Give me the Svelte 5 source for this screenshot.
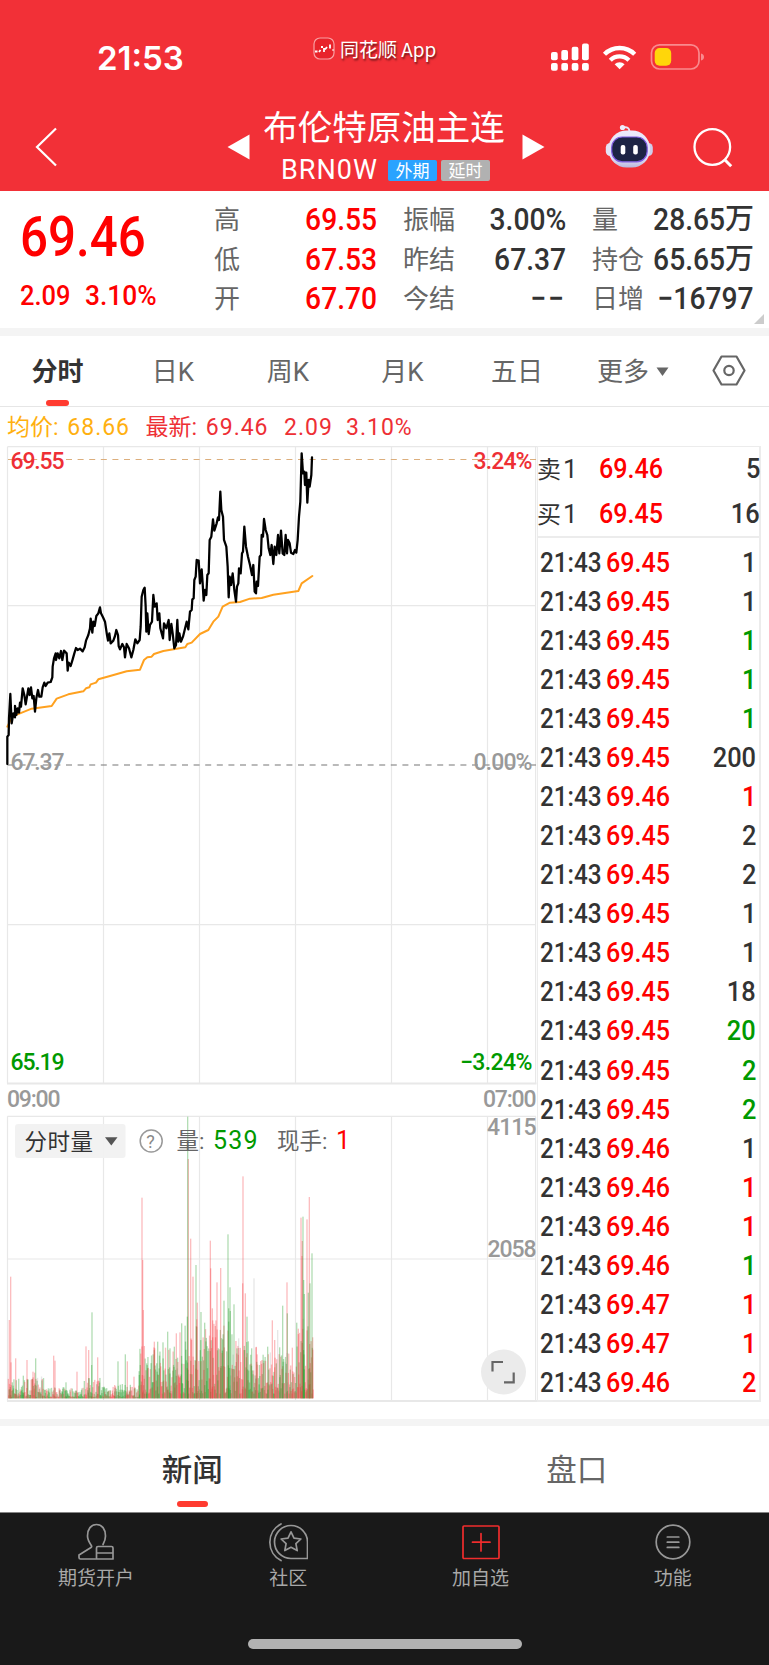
<script>
  const quotes = [
    { label: '高', value: '69.55', up: true },
    { label: '振幅', value: '3.00%' },
    { label: '量', value: '28.65', unit: '万' },
    { label: '低', value: '67.53', up: true },
    { label: '昨结', value: '67.37' },
    { label: '持仓', value: '65.65', unit: '万' },
    { label: '开', value: '67.70', up: true },
    { label: '今结', value: '−−', wide: true },
    { label: '日增', value: '−16797' }
  ]

  const periods = ['分时', '日K', '周K', '月K', '五日']

  const book = [
    { side: '卖', price: '69.46', volume: 5 },
    { side: '买', price: '69.45', volume: 16 }
  ]

  // price, volume, direction
  const ticks = [
    ['69.45', 1, ''],
    ['69.45', 1, ''],
    ['69.45', 1, 'down'],
    ['69.45', 1, 'down'],
    ['69.45', 1, 'down'],
    ['69.45', 200, ''],
    ['69.46', 1, 'up'],
    ['69.45', 2, ''],
    ['69.45', 2, ''],
    ['69.45', 1, ''],
    ['69.45', 1, ''],
    ['69.45', 18, ''],
    ['69.45', 20, 'down'],
    ['69.45', 2, 'down'],
    ['69.45', 2, 'down'],
    ['69.46', 1, ''],
    ['69.46', 1, 'up'],
    ['69.46', 1, 'up'],
    ['69.46', 1, 'down'],
    ['69.47', 1, 'up'],
    ['69.47', 1, 'up'],
    ['69.46', 2, 'up']
  ]

  // both lines are in 3x pixels
  const priceLine =
    '22,972 22,890 26,885 27,835 31,762 35,850 40,820 45,832 45,798 49,825 53,805 57,818 60,788 63,800 68,745 73,765 77,793 81,770 85,745 89,765 93,742 97,775 101,768 105,815 109,775 114,750 118,770 124,770 128,742 133,728 137,738 143,728 152,726 157,712 158,680 162,655 167,640 168,660 173,640 178,655 183,633 187,660 192,632 200,640 203,692 206,668 212,678 218,658 223,640 228,624 233,630 240,626 248,634 254,622 258,602 265,585 270,565 272,536 277,578 280,545 284,558 289,528 295,520 300,502 303,520 309,532 315,545 321,585 324,602 328,580 332,610 340,602 345,588 349,570 354,585 356,618 360,628 367,612 372,622 375,652 380,612 387,625 394,652 400,630 406,598 412,610 419,600 422,560 425,470 430,450 434,443 437,500 439,575 442,520 446,582 450,555 456,545 460,465 464,500 470,490 473,540 478,520 481,565 489,595 492,550 499,565 506,540 509,600 514,552 518,580 523,625 528,615 532,540 535,605 538,580 543,605 549,590 554,570 560,545 565,568 570,515 575,510 577,478 581,475 583,420 587,410 590,360 596,362 600,430 605,388 608,430 611,482 615,450 619,465 622,405 626,400 629,300 634,290 639,238 643,272 650,250 654,232 657,240 661,155 664,210 669,230 672,300 679,320 683,380 686,472 689,410 693,435 698,400 703,450 708,485 711,440 715,430 717,385 722,400 726,340 729,335 733,260 738,320 744,350 750,375 756,405 760,375 764,455 768,460 770,425 774,438 779,350 783,345 785,285 789,290 792,237 797,270 802,285 806,325 811,345 815,315 820,372 824,320 829,345 834,285 838,340 843,272 848,340 853,345 857,285 861,340 864,300 869,310 873,338 880,342 885,330 889,338 893,300 897,230 901,185 905,40 909,100 913,95 915,135 919,98 922,188 926,120 929,140 934,105 936,52'
  const averageLine =
    '22,860 27,850 36,830 60,820 95,806 155,798 170,776 205,763 250,754 258,745 268,742 272,733 288,728 295,718 330,708 380,694 420,689 432,660 442,652 455,650 462,642 490,633 556,622 562,612 575,608 600,582 625,570 640,545 655,530 668,500 690,488 720,486 750,476 785,474 820,464 895,453 905,430 937,408'

  // volume peaks: x, top
  const peaks = {
    up: [[28, 810], [32, 680], [33, 937], [47, 925], [81, 930], [99, 965], [104, 968], [127, 987], [161, 917], [165, 932], [231, 965], [258, 889], [266, 900], [293, 922], [344, 1005], [382, 934], [402, 980], [426, 443], [428, 630], [430, 780], [433, 888], [463, 875], [529, 850], [540, 847], [565, 327], [572, 566], [579, 680], [590, 808], [592, 758], [631, 572], [632, 655], [637, 775], [638, 862], [646, 828], [651, 697], [662, 654], [728, 700], [729, 379], [736, 730], [768, 892], [786, 930], [817, 811], [824, 870], [861, 697], [877, 893], [895, 836], [903, 503], [906, 618], [907, 573], [921, 508], [928, 441], [929, 882], [938, 862]],
    down: [[70, 977], [107, 925], [198, 997], [275, 945], [276, 787], [354, 934], [376, 913], [418, 975], [440, 940], [473, 875], [489, 877], [503, 845], [510, 895], [523, 890], [545, 820], [562, 800], [563, 200], [588, 645], [603, 786], [614, 818], [672, 752], [684, 553], [686, 775], [690, 712], [691, 783], [702, 763], [711, 895], [741, 800], [755, 895], [803, 890], [839, 892], [848, 767], [862, 790], [909, 500], [911, 690], [913, 732], [925, 728], [930, 700], [936, 610]],
    flat: [[762, 685], [833, 840], [716, 865]]
  }

  // activity per stretch of the session: end x, usual peak
  const activity = [[140, 62], [250, 30], [300, 60], [415, 40], [550, 145], [620, 215], [715, 225], [770, 160], [890, 125], [941, 240]]

  let seed = 7
  const random = () => {
    seed = (seed * 16807) % 2147483647
    return seed / 2147483647
  }

  const bars = []
  for (let x = 25; x < 940; x += 1.2) {
    const level = activity.find(([end]) => x < end)[1]
    const r = random()
    const busy = x > 420 ? 14 : 4
    const height = busy + level * Math.pow(random(), 1.6)
    bars.push({ x, height, kind: r < 0.5 ? 'up' : r < 0.96 ? 'down' : 'flat' })
  }
  for (const kind in peaks) {
    for (const [x, top] of peaks[kind]) bars.push({ x, height: 1045 - top, kind })
  }

  const columns = [103.5, 199.5, 295.5, 391.5, 487.5]
</script>

<header>
  <div class="status">
    <span class="clock">21:53</span>
    <span class="app">
      <svg width="22" height="23" viewBox="0 0 22 23">
        <rect x="1" y="1" width="20" height="21" rx="6" fill="#e8232b" stroke="#f8a0a3" stroke-width="1.2" />
        <path d="M2 14.500h2.500M6 15l1.500-2M8 10h2M11 11v4M12 12.500l2-2.500M17 7.500v4M19.500 13h1" fill="none" stroke="#fff" stroke-width="1.800" />
      </svg>
      同花顺 App
    </span>
    <svg class="signals" width="154" height="28" viewBox="551 43 154 28">
      <g fill="#fff">
        <rect x="551" y="52" width="6.7" height="8.300" rx="2" />
        <rect x="561.3" y="50" width="6.700" height="10.300" rx="2" />
        <rect x="571.7" y="46.800" width="6.700" height="13.500" rx="2" />
        <rect x="582" y="43.600" width="6.800" height="16.700" rx="2" />
        <rect x="551" y="63" width="6.700" height="7.800" rx="2" />
        <rect x="561.3" y="63" width="6.700" height="7.800" rx="2" />
        <rect x="571.7" y="63" width="6.700" height="7.800" rx="2" />
        <rect x="582" y="63" width="6.800" height="7.800" rx="2" />
        <path d="M619.600 69.300l-5-5a7.200 7.200 0 0 1 10 0z" />
      </g>
      <g fill="none" stroke="#fff" stroke-width="4.400">
        <path d="M604.500 54.200a21.500 21.500 0 0 1 30.200 0" />
        <path d="M610.300 60.200a13.300 13.300 0 0 1 18.600 0" />
      </g>
      <rect x="651.500" y="44.800" width="47.500" height="24.200" rx="8" fill="none" stroke="#f98a8e" stroke-width="1.700" />
      <path d="M701 53.500q3 .8 3 3.500t-3 3.500z" fill="#f98a8e" />
      <rect x="654.700" y="48" width="16.500" height="17.800" rx="5" fill="#ffd60a" />
    </svg>
  </div>

  <div class="bar">
    <svg class="back" width="23" height="40" viewBox="0 0 23 40">
      <path d="M21 1.500L2 20l19 18.500" fill="none" stroke="#fff" stroke-width="2.200" />
    </svg>
    <svg class="prev" width="23" height="26" viewBox="0 0 23 26"><path d="M22.500 .5v25L.5 13z" fill="#fff" /></svg>
    <div class="title">
      <h1>布伦特原油主连</h1>
      <p>
        <span class="code">BRN0W</span>
        <span class="tag">外期</span>
        <span class="tag delayed">延时</span>
      </p>
    </div>
    <svg class="next" width="23" height="26" viewBox="0 0 23 26"><path d="M.5 .5v25l22-12.500z" fill="#fff" /></svg>
    <svg class="robot" width="48" height="46" viewBox="605 124 48 46">
      <defs>
        <linearGradient id="shell" x1="0" y1="0" x2="0" y2="1">
          <stop offset="0" stop-color="#eceafb" />
          <stop offset=".75" stop-color="#e2e0f6" />
          <stop offset="1" stop-color="#b9b7dd" />
        </linearGradient>
      </defs>
      <path d="M623 127.500q6-1.500 6.500 4" fill="none" stroke="#e9e6f8" stroke-width="2" />
      <circle cx="622.500" cy="127.500" r="2.600" fill="#efecfb" />
      <rect x="605.800" y="143" width="9" height="13" rx="4.500" fill="#e4e2f6" />
      <rect x="643.800" y="143" width="9" height="13" rx="4.500" fill="#cfcdea" />
      <rect x="608.500" y="130.500" width="41.500" height="37" rx="18" fill="url(#shell)" />
      <rect x="611.700" y="137" width="35.500" height="24.800" rx="10.500" fill="#1d2444" stroke="#7e5be0" stroke-width="1.200" />
      <rect x="620.700" y="145" width="4.600" height="9.500" rx="2" fill="#fff" />
      <rect x="633.200" y="145" width="4.600" height="9.500" rx="2" fill="#fff" />
    </svg>
    <svg class="search" width="40" height="40" viewBox="0 0 40 40" fill="none" stroke="#fff" stroke-width="2.300">
      <circle cx="19.300" cy="19" r="17.800" />
      <path d="M31.500 31.500l6.700 6.700" stroke-width="3" />
    </svg>
  </div>
</header>

<section class="quote">
  <div class="last">
    <b class="din">69.46</b>
    <p><span class="din">2.09</span><span class="din">3.10%</span></p>
  </div>
  <dl>
    {#each quotes as { label, value, unit, up, wide }}
      <div>
        <dt>{label}</dt>
        <dd class:up class:wide><span class="din">{value}</span>{#if unit}<i>{unit}</i>{/if}</dd>
      </div>
    {/each}
  </dl>
  <svg class="corner" width="10" height="10" viewBox="0 0 10 10"><path d="M10 0v10H0z" fill="#ccc" /></svg>
</section>

<nav class="periods">
  {#each periods as period, i}
    <span class:active={i === 0}>{period}</span>
  {/each}
  <span class="more">更多<svg width="13" height="10" viewBox="0 0 13 10"><path d="M.5 .5h12l-6 8.500z" fill="#666" /></svg></span>
  <svg class="settings" width="34" height="31" viewBox="0 0 34 31" fill="none" stroke="#666" stroke-width="2.200">
    <path d="M9.500 1.500h15l8 14-8 14h-15l-8-14z" stroke-linejoin="round" />
    <circle cx="17" cy="15.500" r="4.700" />
  </svg>
</nav>

<div class="summary">
  <span class="avg">均价: <em>68.66</em></span>
  <span>最新: <em>69.46</em></span>
  <span><em>2.09</em></span>
  <span><em>3.10%</em></span>
</div>

<main>
  <svg class="chart" width="537" height="957" viewBox="0 446 537 957">
    <g class="grid">
      <path d="M7.500 446.700H537M7.500 605.600H536M7.500 924.600H536M7.500 1116.300H536M7.500 1259H536" />
      {#each columns as x}
        <path d="M{x} 446.700V1083M{x} 1116.300V1401" />
      {/each}
      <path d="M7.500 446.700V1083.500M7.500 1116.300V1401M535.600 446.700V1083.500M535.600 1116.300V1401" />
      <path d="M7 1083.500H536.500M7 1401H537" stroke-width="1.800" />
    </g>
    <path class="dash" d="M8 459.500H536" stroke="#dcae7c" />
    <path class="dash" d="M8 765H536" stroke="#777" />
    <g transform="translate(0 440) scale(.33333)" fill="none" stroke-linejoin="round" stroke-linecap="round">
      <polyline points={averageLine} stroke="#ffa11f" stroke-width="6" />
      <polyline points={priceLine} stroke="#000" stroke-width="6.800" />
    </g>

    <g class="scale">
      <text x="10.500" y="469" textLength="54" class="high">69.55</text>
      <text x="473.500" y="469" textLength="59" class="high">3.24%</text>
      <text x="10.500" y="769.500" textLength="54">67.37</text>
      <text x="473.500" y="769.500" textLength="59">0.00%</text>
      <text x="10.500" y="1070" textLength="54" class="low">65.19</text>
      <text x="460" y="1070" textLength="72.500" class="low">−3.24%</text>
      <text x="7" y="1107" textLength="53.500">09:00</text>
      <text x="483" y="1107" textLength="53.500">07:00</text>
      <text x="487" y="1135" textLength="49.500">4115</text>
      <text x="487.500" y="1257" textLength="49">2058</text>
    </g>

    <g transform="translate(0 1050) scale(.33333)">
      {#each bars as { x, height, kind }}
        <rect class={kind} x={x - 2} y={1045 - height} width="4" {height} />
      {/each}
    </g>

    <g class="legend">
      <rect x="15" y="1124" width="110.500" height="34" rx="3" fill="#f1f1f1" fill-opacity=".96" />
      <text x="24.500" y="1149.500" textLength="68.500" fill="#333">分时量</text>
      <path d="M105 1137.300h12.500l-6.200 8.200z" fill="#555" />
      <circle cx="151.200" cy="1141" r="11" fill="none" stroke="#999" stroke-width="1.500" />
      <text x="146.300" y="1147.500" class="help">?</text>
      <text x="176.500" y="1149">量:</text>
      <text x="213" y="1149.300" class="count low" textLength="44.500">539</text>
      <text x="277" y="1149">现手:</text>
      <text x="336" y="1149.300" class="count now">1</text>
    </g>

    <circle cx="503.500" cy="1372" r="22.500" fill="#ebebeb" />
    <path d="M492.500 1371.500v-9.500h10.500M504 1382.300h9.700v-9.800" fill="none" stroke="#666" stroke-width="2.200" />
  </svg>

  <aside>
    <div class="book">
      {#each book as { side, price, volume }}
        <p>
          <span class="side">{side}<em>1</em></span>
          <span class="din price">{price}</span>
          <span class="din volume">{volume}</span>
        </p>
      {/each}
    </div>
    <ul>
      {#each ticks as [price, volume, direction]}
        <li>
          <span class="din time">21:43</span>
          <span class="din price">{price}</span>
          <span class="din volume {direction}">{volume}</span>
        </li>
      {/each}
    </ul>
  </aside>
</main>

<nav class="sections">
  <span class="active">新闻</span>
  <span>盘口</span>
</nav>

<footer>
  <div class="tools">
    <div>
      <svg width="40" height="40" viewBox="-1 0 40 40">
        <path d="M18 36H3.500q-1.500 0-1.500-1.500V32l12-7.500c.8-.5.800-1.200.300-2-2-3-3.800-6-3.800-9.500 0-7 3.500-11.500 9-11.500s9 4.500 9 11.500c0 3.200-1 5.800-2.500 8.500M19.500 36V25q0-1.500 1.500-1.500h13.500q1.500 0 1.500 1.500v11zM19.500 30H36" />
      </svg>
      期货开户
    </div>
    <div>
      <svg width="40" height="40" viewBox="-.5 0 40 40">
        <path d="M22.500 2.500a16 16 0 0 0 0 33H39V19A16.500 16.500 0 0 0 22.500 2.500z" />
        <path d="M12.500 1a20.500 20.500 0 0 0 0 36.500" />
        <path d="M22.500 8.800l3 6.300 6.900.900-5 4.700 1.300 6.900-6.200-3.300-6.200 3.300 1.300-6.900-5-4.700 6.900-.9z" />
      </svg>
      社区
    </div>
    <div>
      <svg class="add" width="40" height="40" viewBox="0 0 40 40">
        <rect x="2" y="3" width="36" height="32.500" rx="1" />
        <path d="M20 10.500v17.500M11.500 19.200h17.500" />
      </svg>
      加自选
    </div>
    <div>
      <svg width="40" height="40" viewBox="0 0 40 40">
        <circle cx="20" cy="19" r="16.800" />
        <path d="M14.300 14h11.500M14.300 19.200h11.500M14.300 24.400h11.500" />
      </svg>
      功能
    </div>
  </div>
  <div class="home"></div>
</footer>

<style>
  :global(body) {
    background: #fff;
    font-family: Roboto, 'Noto Sans CJK SC', sans-serif;
    color: #333;
  }
  :global(#app) {
    width: 769px;
    height: 1665px;
    overflow: hidden;
  }
  svg {
    display: block;
    flex: none;
  }
  h1,
  p,
  dl,
  dd,
  ul {
    margin: 0;
    padding: 0;
    list-style: none;
  }
  em,
  i {
    font-style: normal;
  }
  /* narrow digits */
  .din {
    display: inline-block;
    font-weight: 500;
    transform: scaleX(0.91);
    transform-origin: left;
    white-space: pre;
  }

  header {
    height: 191px;
    background: #f23037;
    color: #fff;
  }
  .status {
    height: 100px;
    display: grid;
    grid-template-columns: 97px 216px 238px 1fr;
    align-items: start;
  }
  .clock {
    grid-column: 2;
    padding-top: 38px;
    font: 600 33px/40px Inter, sans-serif;
  }
  .app {
    display: flex;
    gap: 5px;
    padding-top: 37px;
    font: 19px/23px 'Noto Sans CJK SC', sans-serif;
    text-shadow: 1px 2px 2px rgba(0, 0, 0, 0.55);
    white-space: nowrap;
  }
  .signals {
    margin-top: 43px;
  }
  .bar {
    height: 91px;
    display: grid;
    grid-template-columns: 192px 23px 272px 84px 86px 1fr;
    padding-left: 35px;
    align-items: start;
  }
  .back {
    margin-top: 27px;
  }
  .prev,
  .next {
    margin-top: 34px;
  }
  .title {
    text-align: center;
  }
  h1 {
    font-size: 34.5px;
    line-height: 44px;
    font-weight: 400;
    margin: 6px -8px 0 -12px;
    white-space: nowrap;
  }
  .title p {
    display: flex;
    margin: 7px 0 0 31px;
    align-items: center;
    height: 26px;
  }
  .code {
    font-size: 27px;
    line-height: 28px;
    width: 107px;
    text-align: left;
    letter-spacing: 1px;
  }
  .tag {
    width: 49px;
    height: 21px;
    margin-right: 4px;
    border-radius: 2px;
    background: #2aa3ff;
    font-size: 17px;
    line-height: 22px;
  }
  .tag.delayed {
    background: #b1b1b1;
  }
  .robot {
    margin-top: 24px;
    margin-left: -1px;
  }
  .search {
    margin: 28px 0 0 1px;
  }

  .quote {
    position: relative;
    height: 137px;
    display: flex;
    border-bottom: 8px solid #f4f4f4;
  }
  .last {
    width: 214px;
    padding-left: 20px;
    box-sizing: border-box;
    color: #f00;
  }
  .last b {
    margin-top: 16px;
    font-size: 56px;
    line-height: 60px;
    transform: scaleX(0.88);
  }
  .last p {
    display: flex;
    font-size: 28px;
    line-height: 36px;
    margin-top: 11px;
  }
  .last p span:first-child {
    width: 65px;
  }
  .last p span:last-child {
    transform: scaleX(0.94);
  }
  dl {
    display: grid;
    grid-template-columns: 163px 163px 162px;
    column-gap: 26px;
    grid-auto-rows: 39.5px;
    padding-top: 9px;
  }
  dl div {
    display: flex;
    justify-content: space-between;
    line-height: 39px;
  }
  dt {
    padding-top: 1px;
    font-size: 26px;
    color: #666;
    font-weight: 400;
  }
  dd {
    font-size: 31px;
    white-space: nowrap;
    display: flex;
  }
  dd .din {
    transform-origin: right;
  }
  dd.wide .din {
    letter-spacing: 2px;
  }
  dd i {
    font-size: 29px;
    font-weight: 500;
  }
  .up {
    color: #f00;
  }
  .down {
    color: #090;
  }
  .corner {
    position: absolute;
    right: 5px;
    bottom: 4px;
  }

  .periods {
    height: 70px;
    display: grid;
    grid-template-columns: 115px 116px 114px 115px 114px 133px 1fr;
    border-bottom: 1px solid #e6e6e6;
    font-size: 26px;
    line-height: 73px;
    color: #666;
    font-weight: 400;
  }
  .periods span {
    position: relative;
    height: 70px;
    text-align: center;
  }
  .active {
    color: #333;
    font-weight: 500;
  }
  .active::after {
    content: '';
    position: absolute;
    left: 50%;
    bottom: 0;
    width: 23px;
    height: 6px;
    margin-left: -11.5px;
    border-radius: 3px;
    background: #ff3b30;
  }
  .periods .active {
    font-weight: 600;
  }
  .periods .more {
    display: flex;
    box-sizing: border-box;
    align-items: center;
    gap: 7px;
    padding: 2px 0 0 23px;
  }
  .settings {
    margin: 19px 0 0 5px;
  }

  .summary {
    height: 39px;
    display: flex;
    padding-left: 7px;
    font-size: 23px;
    line-height: 42px;
    font-weight: 400;
    color: #ee2f35;
    white-space: pre;
  }
  .summary em {
    letter-spacing: 1px;
  }
  .summary span:nth-child(-n + 2) em {
    margin-left: 3px;
  }
  .summary span:nth-child(-n + 2) {
    width: 138.500px;
  }
  .summary span:nth-child(3) {
    width: 62px;
  }
  .summary .avg {
    color: #ffb010;
  }

  main {
    height: 973px;
    display: flex;
    border-bottom: 7px solid #f4f4f4;
  }
  .grid {
    fill: none;
    stroke: #e8e8e8;
    stroke-width: 1.2;
  }
  .dash {
    stroke-width: 1.2;
    stroke-dasharray: 6 5.6;
  }
  .scale {
    font-size: 23px;
    font-weight: 500;
    fill: #999;
  }
  .scale .high {
    fill: #ee2f35;
  }
  .scale .low {
    fill: #090;
  }
  rect.up {
    fill: rgba(245, 50, 55, 0.32);
  }
  rect.down {
    fill: rgba(20, 150, 25, 0.32);
  }
  rect.flat {
    fill: rgba(120, 120, 120, 0.18);
  }
  .legend {
    font-size: 22.5px;
    fill: #666;
  }
  .legend .help {
    font-size: 18px;
    fill: #888;
  }
  .legend .count {
    font-size: 25px;
    font-weight: 450;
  }
  .legend .low {
    fill: #090;
  }
  .legend .now {
    fill: #f00;
  }

  aside {
    width: 224px;
    height: 955.5px;
    box-sizing: border-box;
    border: 2px solid #ececec;
    border-top-width: 1px;
    border-left-width: 1px;
    font-size: 27px;
  }
  .book {
    height: 91px;
    box-sizing: border-box;
    border-bottom: 2px solid #ececec;
  }
  .book p {
    display: flex;
    height: 45px;
    line-height: 45px;
  }
  .side {
    width: 61px;
    margin-left: -1px;
    margin-right: 1px;
    font-size: 24px;
    white-space: nowrap;
  }
  .side em {
    font-size: 26px;
    margin-left: 2px;
  }
  .price {
    color: #f00;
    transform: scaleX(0.93);
  }
  .volume {
    margin-left: auto;
    transform-origin: right;
    transform: scaleX(0.94);
  }
  .book .volume {
    margin-right: -1px;
  }
  ul {
    padding: 5.5px 3px 0 2px;
  }
  li {
    display: flex;
    height: 39.08px;
    line-height: 39px;
  }
  .time {
    width: 66px;
    transform: scaleX(0.9);
  }

  .sections {
    height: 86px;
    display: grid;
    grid-template-columns: 1fr 1fr;
    text-align: center;
    font-size: 30.5px;
    line-height: 89px;
    color: #666;
    font-weight: 400;
  }
  .sections span {
    position: relative;
    height: 86px;
  }
  .sections .active::after {
    width: 31px;
    margin-left: -15.5px;
    bottom: 5.5px;
  }

  footer {
    height: 152px;
    border-top: 1px solid #858585;
    background: #191919;
  }
  .tools {
    display: grid;
    grid-template-columns: repeat(4, 1fr);
    padding-top: 9.5px;
    height: 115px;
    box-sizing: border-box;
    font-size: 19px;
    line-height: 26px;
    font-weight: 400;
    text-align: center;
    color: #a8a8a8;
  }
  .tools svg {
    margin: 0 auto 3px;
    fill: none;
    stroke: #979797;
    stroke-width: 1.7;
    stroke-linejoin: round;
    stroke-linecap: round;
  }
  .tools .add {
    stroke: #f02d2d;
  }
  .home {
    width: 274px;
    height: 10px;
    margin: 11px auto 0;
    border-radius: 5px;
    background: #b2b2b2;
  }
</style>
